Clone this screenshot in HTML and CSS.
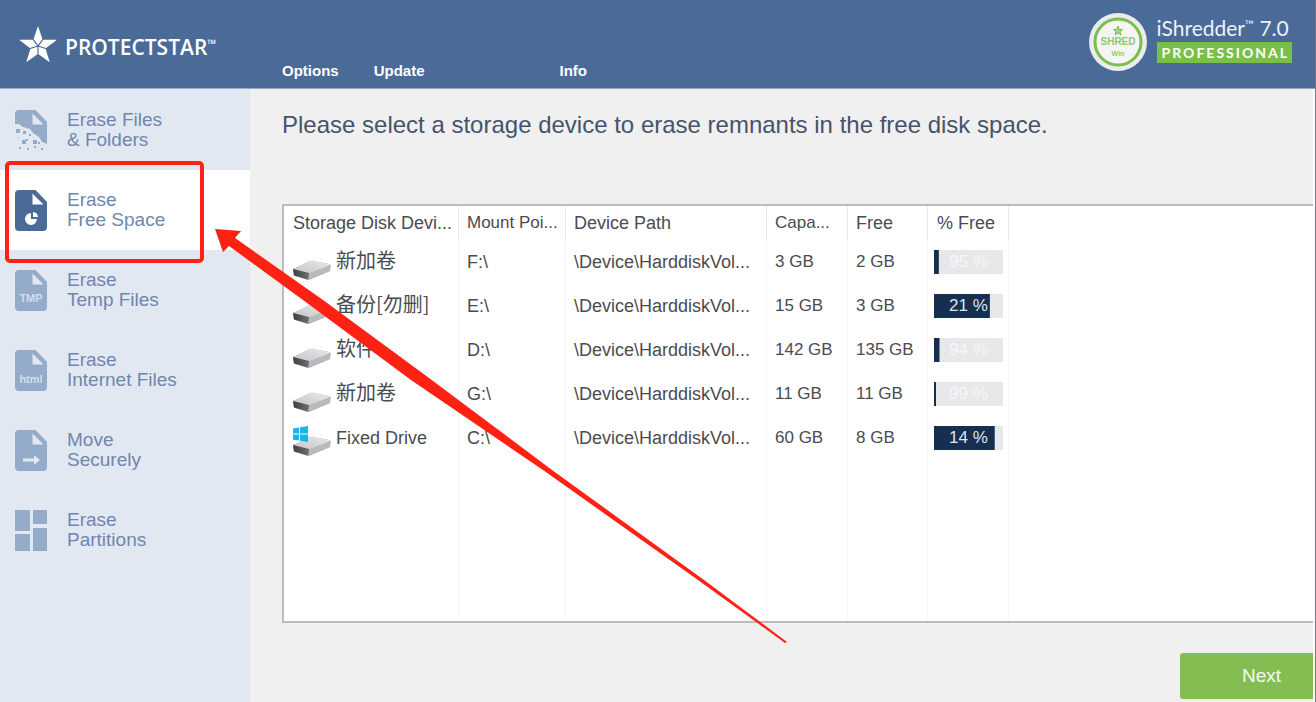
FILE: index.html
```html
<!DOCTYPE html>
<html lang="en">
<head>
<meta charset="utf-8">
<title>iShredder 7.0 Professional</title>
<link rel="stylesheet" href="styles.css">
</head>
<body>
<svg class="defs" aria-hidden="true">
  <defs>
    <linearGradient id="driveTop" x1="0" y1="1" x2="1" y2="0">
      <stop offset="0" stop-color="#c4c5c7"/><stop offset="1" stop-color="#e9e9eb"/>
    </linearGradient>
    <linearGradient id="driveFront" x1="0" y1="0" x2="1" y2="0">
      <stop offset="0" stop-color="#3c4042"/><stop offset="1" stop-color="#6c7072"/>
    </linearGradient>
    <symbol id="drive" viewBox="0 0 38 40">
      <path d="M0 27 16 19.500Q18 18.500 21 19L36 22Q38 22.500 37.500 24L37 29 17 37.500Q15 38 13 37.500L1 33.500Z" fill="#a2a4a6"/>
      <path d="M0 27 16 19.500Q18 18.500 21 19L36 22Q38 22.500 36.500 23.500L16 31.500Z" fill="url(#driveTop)"/>
      <path d="M0 27 16 31 15 37.500 1 33.500Z" fill="url(#driveFront)"/>
      <path d="M16 31.500 37.500 23 37 29 16 37.500Z" fill="#b9babc"/>
    </symbol>
    <symbol id="file" viewBox="0 0 32 41">
      <path fill-rule="evenodd" d="M4 0H20.500L32 12V37Q32 41 28 41H4Q0 41 0 37V4Q0 0 4 0ZM17.500 3.500V14.500H28.500Z"/>
    </symbol>
  </defs>
</svg>

<header class="header">
  <div class="brand">
    <svg class="star" viewBox="0 0 38 37" aria-hidden="true">
      <g fill="#fff">
        <path d="M19 0 23.400 13 19 19 14.600 13Z"/>
        <path d="M19 0 23.400 13 19 19 14.600 13Z" transform="rotate(72 19 20)"/>
        <path d="M19 0 23.400 13 19 19 14.600 13Z" transform="rotate(144 19 20)"/>
        <path d="M19 0 23.400 13 19 19 14.600 13Z" transform="rotate(216 19 20)"/>
        <path d="M19 0 23.400 13 19 19 14.600 13Z" transform="rotate(288 19 20)"/>
      </g>
    </svg>
    <span class="brand-name">PROTECTSTAR<sup>™</sup></span>
  </div>
  <nav class="menu" aria-label="Main menu">
    <button type="button">Options</button>
    <button type="button">Update</button>
    <button type="button" class="info">Info</button>
  </nav>
  <div class="product">
    <svg class="badge" viewBox="0 0 58 58" role="img" aria-label="Shred Win">
      <circle cx="29" cy="29" r="29" fill="#ececf0"/>
      <circle cx="29" cy="29" r="23" fill="#f5f5f5" stroke="#79bf49" stroke-width="3"/>
      <path d="M29 13 30.200 16.500H33.500L31 18.700 32 22 29 20 26 22 27 18.700 24.500 16.500H27.800Z" fill="#a5d48a" stroke="#79bf49"/>
      <text x="29" y="32" text-anchor="middle" class="badge-title">SHRED</text>
      <text x="29" y="43" text-anchor="middle" class="badge-sub">Win</text>
    </svg>
    <div class="product-text">
      <span class="product-name">iShredder<sup>™</sup> 7.0</span>
      <span class="edition">PROFESSIONAL</span>
    </div>
  </div>
</header>

<div class="body">
  <nav class="sidebar" aria-label="Erase modes">
    <a href="#files" class="item">
      <svg class="icon" viewBox="0 0 32 41" aria-hidden="true">
        <path fill-rule="evenodd" d="M4 0H20.500L32 12V34L27 32 24 27 18 23 15 19 8 17 4 14 0 14V4Q0 0 4 0ZM17.500 3.500V14.500H28.500Z"/>
        <path d="M1 19h4v4H1zM8 21h3v3H8zM14 24h2v2h-2zM7 30h4v4H7zM11 29h2v2h-2zM18 30h4v4h-4zM23 32h2v2h-2zM4 37h2v2H4zM12 38h2v2h-2zM19 36h2v2h-2zM26 38h2v2h-2zM3 27h1v1H3z"/>
      </svg>
      <span>Erase Files<br>&amp; Folders</span>
    </a>
    <a href="#free" class="item active" aria-current="page">
      <svg class="icon" viewBox="0 0 32 41" aria-hidden="true">
        <use href="#file"/>
        <path d="M16 23A6 6 0 1 0 22 29H16Z" fill="#fff"/>
        <path d="M18 22A5.500 5.500 0 0 1 23 27H18Z" fill="#fff"/>
      </svg>
      <span>Erase<br>Free Space</span>
    </a>
    <a href="#temp" class="item">
      <svg class="icon" viewBox="0 0 32 41" aria-hidden="true">
        <use href="#file"/>
        <text x="16" y="32" text-anchor="middle" class="tag">TMP</text>
      </svg>
      <span>Erase<br>Temp Files</span>
    </a>
    <a href="#internet" class="item">
      <svg class="icon" viewBox="0 0 32 41" aria-hidden="true">
        <use href="#file"/>
        <text x="16" y="33" text-anchor="middle" class="tag">html</text>
      </svg>
      <span>Erase<br>Internet Files</span>
    </a>
    <a href="#move" class="item">
      <svg class="icon" viewBox="0 0 32 41" aria-hidden="true">
        <use href="#file"/>
        <path d="M8 28.500H19V25L25 30 19 35V31.500H8Z" fill="#e1e8f2"/>
      </svg>
      <span>Move<br>Securely</span>
    </a>
    <a href="#partitions" class="item">
      <svg class="icon" viewBox="0 0 32 41" aria-hidden="true">
        <path d="M0 0H15V21H0ZM18 0H32V14H18ZM0 24H15V41H0ZM18 18H32V41H18Z"/>
      </svg>
      <span>Erase<br>Partitions</span>
    </a>
  </nav>

  <main class="content">
    <h1>Please select a storage device to erase remnants in the free disk space.</h1>
    <div class="panel">
      <table>
        <colgroup>
          <col class="c-name"><col class="c-mount"><col class="c-path"><col class="c-size"><col class="c-free"><col class="c-pct"><col>
        </colgroup>
        <thead>
          <tr><th>Storage Disk Devi...</th><th class="num">Mount Poi...</th><th>Device Path</th><th class="num">Capa...</th><th>Free</th><th>% Free</th><th></th></tr>
        </thead>
        <tbody>
          <tr>
            <td><div class="device"><svg viewBox="0 0 38 40"><use href="#drive"/></svg><span class="cjk">新加卷</span></div></td>
            <td>F:\</td><td>\Device\HarddiskVol...</td><td class="num">3 GB</td><td class="num">2 GB</td>
            <td><div class="meter" style="--used: 7%">95 %</div></td><td></td>
          </tr>
          <tr>
            <td><div class="device"><svg viewBox="0 0 38 40"><use href="#drive"/></svg><span class="cjk">备份[勿删]</span></div></td>
            <td>E:\</td><td>\Device\HarddiskVol...</td><td class="num">15 GB</td><td class="num">3 GB</td>
            <td><div class="meter high" style="--used: 81%">21 %</div></td><td></td>
          </tr>
          <tr>
            <td><div class="device"><svg viewBox="0 0 38 40"><use href="#drive"/></svg><span class="cjk">软件</span></div></td>
            <td>D:\</td><td>\Device\HarddiskVol...</td><td class="num">142 GB</td><td class="num">135 GB</td>
            <td><div class="meter" style="--used: 8%">94 %</div></td><td></td>
          </tr>
          <tr>
            <td><div class="device"><svg viewBox="0 0 38 40"><use href="#drive"/></svg><span class="cjk">新加卷</span></div></td>
            <td>G:\</td><td>\Device\HarddiskVol...</td><td class="num">11 GB</td><td class="num">11 GB</td>
            <td><div class="meter" style="--used: 3%">99 %</div></td><td></td>
          </tr>
          <tr>
            <td><div class="device"><svg viewBox="0 0 38 40"><use href="#drive"/><path d="M0 10.500 6 9.500V15.500H0ZM7 9.300 15 8V15.500H7ZM0 16.500H6V22.500L0 21.700ZM7 16.500H15V24L7 22.700Z" fill="#1bb4e6"/></svg><span>Fixed Drive</span></div></td>
            <td>C:\</td><td>\Device\HarddiskVol...</td><td class="num">60 GB</td><td class="num">8 GB</td>
            <td><div class="meter high" style="--used: 88%">14 %</div></td><td></td>
          </tr>
          <tr class="rest"><td></td><td></td><td></td><td></td><td></td><td></td><td></td></tr>
        </tbody>
      </table>
    </div>
    <div class="actions"><button type="button" class="next">Next</button></div>
  </main>
</div>

<svg class="annotation" viewBox="0 0 800 660" aria-hidden="true">
  <rect x="7" y="163" width="195" height="98" rx="3" fill="none" stroke="#ff2114" stroke-width="4"/>
  <path d="M215 229 241 231 235 238 323 300 425 375 552 470 704 580 787 642 785 643 698 580 543 470 411 380 303 300 229 246 223 252Z" fill="#ff2114"/>
</svg>
</body>
</html>
```
FILE: styles.css
```css
* {
  box-sizing: border-box;
}

body {
  margin: 0;
  min-height: 100vh;
  display: flex;
  flex-direction: column;
  background: #f0f0f0;
  border-right: 1px solid #77797f;
  font-family: "Liberation Sans", Arial, "Noto Sans CJK SC", sans-serif;
  overflow-x: hidden;
}

button {
  border: 0;
  padding: 0;
  background: none;
  color: inherit;
  font: inherit;
}

.defs {
  position: absolute;
  width: 0;
  height: 0;
}

.header {
  display: grid;
  grid-template-columns: 282px 1fr auto;
  height: 89px;
  padding-right: 23px;
  background: #4a6a97;
  border-bottom: 1px solid #98a8c4;
  color: #fff;
}

.brand {
  display: flex;
  align-items: center;
  gap: 8px;
  padding-left: 19px;
}

.star {
  width: 38px;
  height: 37px;
}

.brand-name {
  padding-top: 6px;
  font: 600 21px/28px "Open Sans", sans-serif;
}

.brand-name sup,
.product-name sup {
  font-size: 12px;
  line-height: 0;
  vertical-align: 7px;
  font-weight: 400;
}

.menu {
  display: flex;
  align-items: flex-end;
  gap: 35px;
  padding-bottom: 8px;
  font-size: 15px;
  line-height: 18px;
  font-weight: 700;
}

.menu .info {
  margin-left: 100px;
}

.product {
  display: flex;
  align-items: flex-start;
  gap: 10px;
  padding-top: 13px;
}

.badge {
  width: 58px;
  height: 58px;
}

.badge-title {
  font: 700 10px "Liberation Sans", sans-serif;
  fill: #8fc970;
}

.badge-sub {
  font: 700 7px "Liberation Sans", sans-serif;
  fill: #8fc970;
}

.product-text {
  display: flex;
  flex-direction: column;
}

.product-name {
  font: 400 21px/29px Lato, sans-serif;
  color: #eef2f8;
}

.edition {
  padding: 0 3px 0 5px;
  background: #79bf49;
  font: 700 14px/21px Lato, sans-serif;
  letter-spacing: 2px;
}

.body {
  flex: 1;
  display: flex;
  border-right: 2px solid #fff;
}

.sidebar {
  flex: 0 0 250px;
  padding-top: 1px;
  background: #e1e8f2;
}

.item {
  display: flex;
  align-items: center;
  gap: 20px;
  min-height: 80px;
  padding-left: 15px;
  color: #6f86ad;
  font-size: 19px;
  line-height: 20px;
  text-decoration: none;
}

.item.active {
  background: #fff;
}

.icon {
  width: 32px;
  height: 41px;
  fill: #95abca;
}

.active .icon {
  fill: #4a6a97;
}

.tag {
  font: 700 11px "Liberation Sans", sans-serif;
  fill: #d3ddeb;
}

.content {
  flex: 1;
  min-width: 0;
  display: flex;
  flex-direction: column;
  padding: 21px 0 3px 32px;
}

h1 {
  margin: 0 0 64px;
  color: #46536b;
  font-size: 24px;
  line-height: 30px;
  font-weight: 400;
}

.panel {
  flex: 1;
  display: flex;
  background: #fff;
  border: 2px solid #bcbcbc;
  border-right: 0;
}

table {
  width: 100%;
  table-layout: fixed;
  border-collapse: separate;
  border-spacing: 0;
  color: #4b4b50;
  font-size: 18px;
  line-height: 22px;
}

.c-name { width: 175px; }
.c-mount { width: 107px; }
.c-path { width: 201px; }
.c-size { width: 81px; }
.c-free { width: 80px; }
.c-pct { width: 81px; }

th,
td {
  height: 44px;
  padding: 0 0 0 8px;
  border-right: 1px solid #f5f5f5;
  font-weight: 400;
  text-align: left;
  white-space: nowrap;
}

th {
  height: 34px;
  border-right-color: #e9e9e9;
}

th:last-child,
td:last-child {
  border-right: 0;
}

.num {
  font-size: 17px;
}

.rest td {
  height: auto;
}

.device {
  display: flex;
  align-items: center;
  gap: 5px;
}

.device svg {
  width: 38px;
  height: 40px;
}

.cjk {
  padding-bottom: 4px;
  font-size: 20px;
  font-family: "Noto Sans CJK SC", sans-serif;
}

td:first-child,
th:first-child {
  padding-left: 9px;
}

th:nth-child(6) {
  padding-left: 9px;
}

td:nth-child(6) {
  padding-left: 6px;
}

.meter {
  width: 69px;
  padding-left: 15px;
  background: linear-gradient(#162e50, #162e50) 0 0 / var(--used) 100% no-repeat #e6e8ea;
  color: #f6f7f8;
  font-size: 17px;
  line-height: 24px;
}

.meter.high {
  color: #dfe5ec;
}

.actions {
  display: flex;
  justify-content: flex-end;
  padding-top: 30px;
}

.next {
  width: 133px;
  height: 46px;
  padding-left: 30px;
  background: #84be52;
  border-radius: 3px 0 0 3px;
  color: #f4faee;
  font-size: 19px;
}

.annotation {
  position: absolute;
  left: 0;
  top: 0;
  width: 800px;
  height: 660px;
  pointer-events: none;
}
```
